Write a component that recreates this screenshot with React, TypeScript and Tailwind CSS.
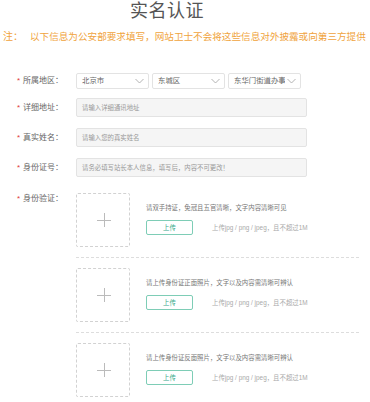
const FONT = { fontFamily: '"Liberation Sans", "Noto Sans CJK SC", sans-serif' };

const Chevron = () => (
  <svg width="9" height="6" viewBox="0 0 9 6" className="shrink-0">
    <path d="M0.5 1 L4.5 5 L8.5 1" fill="none" stroke="#aaa" strokeWidth="0.9" />
  </svg>
);

const Label = ({ text }: { text: string }) => (
  <div className="w-[59px] shrink-0 flex items-center text-[8px] text-[#666]">
    <span className="text-[#e03a3a] w-[6px]">*</span>
    <span>{text}：</span>
  </div>
);

const Select = ({ value }: { value: string }) => (
  <div className="w-[73px] h-[16px] border border-[#e3e3e3] rounded-[2px] bg-white flex items-center pl-[5px] pr-[4px] text-[7.4px] text-[#666] whitespace-nowrap">
    <span className="flex-1 overflow-hidden">{value}</span>
    <span className="ml-[2px] flex items-center">
      <Chevron />
    </span>
  </div>
);

const Input = ({ placeholder }: { placeholder: string }) => (
  <div className="w-[231px] h-[19px] border border-[#e3e3e3] bg-[#f5f5f5] rounded-[2px] flex items-center pl-[5px] text-[6.4px] text-[#999]">
    {placeholder}
  </div>
);

const Upload = ({ tip }: { tip: string }) => (
  <div className="flex">
    <div className="w-[54px] h-[54px] border border-dashed border-[#d2d2d2] rounded-[2px] relative shrink-0">
      <div className="absolute left-[20px] top-[26px] w-[14px] h-px bg-[#bbb]" />
      <div className="absolute left-[26.5px] top-[19px] w-px h-[14px] bg-[#bbb]" />
    </div>
    <div className="ml-[16px] pt-[11px]">
      <div className="text-[6.4px] text-[#777] leading-[8px]">{tip}</div>
      <div className="flex items-center mt-[8px]">
        <div className="w-[47px] h-[15px] border border-[#7ecdb6] rounded-[2px] flex items-center justify-center text-[6.4px] text-[#3aa98a]">
          上传
        </div>
        <span className="ml-[19px] text-[6.4px] text-[#aaa]">上传jpg / png / jpeg，且不超过1M</span>
      </div>
    </div>
  </div>
);

const Sep = () => <div className="ml-[76px] w-[283px] border-t border-dashed border-[#ddd] my-[10px]" />;

export default function App() {
  return (
    <div className="w-[370px] h-[402px] bg-white overflow-hidden" style={FONT}>
      <div className="pl-[130px] pt-[1px] text-[18px] leading-[20px] text-[#555] tracking-[0.5px]">实名认证</div>
      <div className="flex items-center mt-[10px] pl-[3px] text-[10px] leading-[12px] text-[#f0a33c] whitespace-nowrap">
        <span className="w-[27px] shrink-0">注：</span>
        <span className="text-[9.6px]">以下信息为公安部要求填写，网站卫士不会将这些信息对外披露或向第三方提供</span>
      </div>

      <div className="pl-[17px] mt-[30px] flex flex-col">
        <div className="flex items-center">
          <Label text="所属地区" />
          <div className="flex gap-[3px]">
            <Select value="北京市" />
            <Select value="东城区" />
            <Select value="东华门街道办事处" />
          </div>
        </div>
        <div className="flex items-center mt-[9px]">
          <Label text="详细地址" />
          <Input placeholder="请输入详细通讯地址" />
        </div>
        <div className="flex items-center mt-[11px]">
          <Label text="真实姓名" />
          <Input placeholder="请输入您的真实姓名" />
        </div>
        <div className="flex items-center mt-[11px]">
          <Label text="身份证号" />
          <Input placeholder="请务必填写站长本人信息，填写后，内容不可更改！" />
        </div>
      </div>

      <div className="mt-[16px]">
        <div className="flex pl-[17px]">
          <div className="h-[10px] flex items-start">
            <Label text="身份验证" />
          </div>
          <Upload tip="请双手持证，免冠且五官清晰，文字内容清晰可见" />
        </div>
        <Sep />
        <div className="pl-[76px]">
          <Upload tip="请上传身份证正面照片，文字以及内容需清晰可辨认" />
        </div>
        <Sep />
        <div className="pl-[76px]">
          <Upload tip="请上传身份证反面照片，文字以及内容需清晰可辨认" />
        </div>
      </div>
    </div>
  );
}
